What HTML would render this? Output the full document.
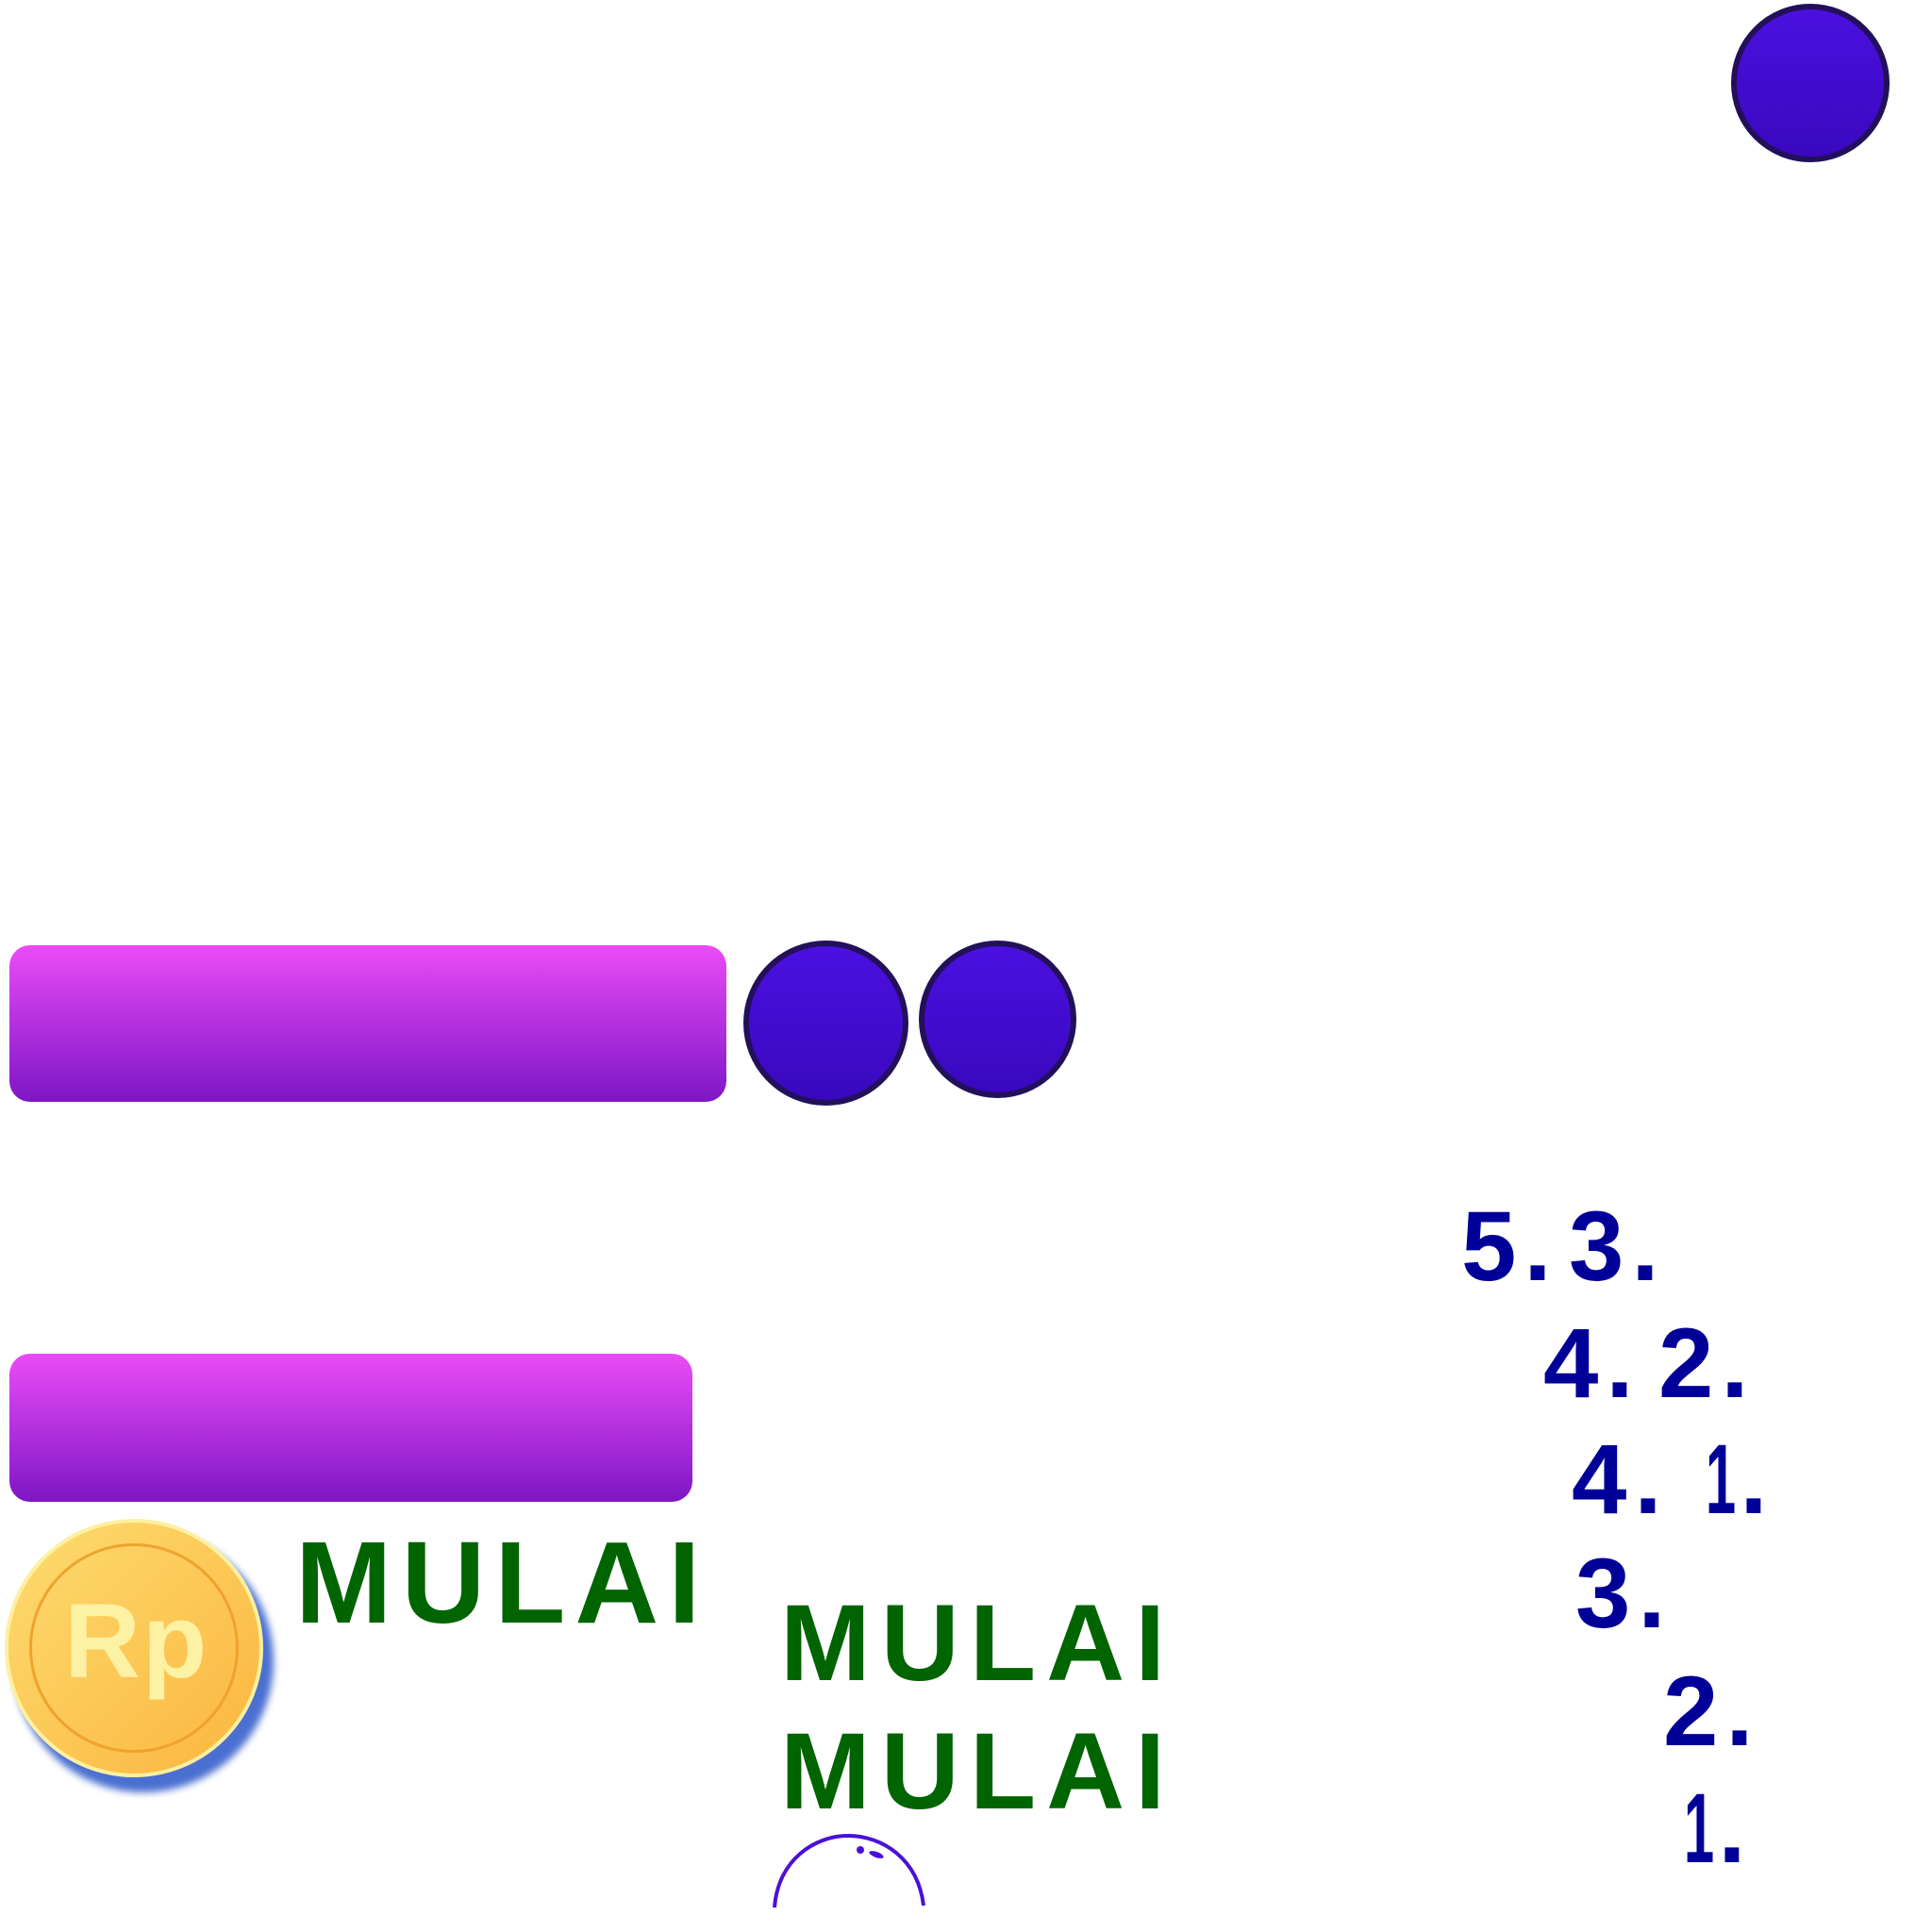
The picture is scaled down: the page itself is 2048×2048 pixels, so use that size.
<!DOCTYPE html>
<html><head><meta charset="utf-8"><style>
html,body{margin:0;padding:0;background:#fff;width:2048px;height:2048px;overflow:hidden;position:relative;font-family:"Liberation Sans",sans-serif}
.c{position:absolute;border-radius:50%;background:linear-gradient(#4b10e0,#3a08bf);border:6px solid #23105a;box-sizing:border-box}
.bar{position:absolute;left:10px;border-radius:22px;background:linear-gradient(#ea4cf6,#7e16c6)}
.m{position:absolute;color:#006400;font-weight:bold;line-height:1;white-space:nowrap}
.n{position:absolute;color:#000099;font-weight:bold;font-size:105px;line-height:1;white-space:nowrap}
.n b{display:inline-block;width:8px}
.one{display:inline-block;transform:scaleX(0.55);transform-origin:left;margin-right:-22px}
</style></head><body>
<div class="c" style="left:1835px;top:4px;width:168px;height:168px"></div>
<div class="bar" style="top:1002px;width:760px;height:166px"></div>
<div class="c" style="left:788px;top:997px;width:175px;height:175px"></div>
<div class="c" style="left:974px;top:997px;width:167px;height:167px"></div>
<div class="bar" style="top:1435px;width:724px;height:157px"></div>

<div style="position:absolute;left:14px;top:1622px;width:276px;height:278px;border-radius:50%;background:#4a6fd0;filter:blur(4px)"></div>
<div style="position:absolute;left:5px;top:1610px;width:274px;height:274px;border-radius:50%;background:linear-gradient(135deg,#fddc70,#fbb53e);border:4px solid #fdf0a0;box-sizing:border-box"></div>
<div style="position:absolute;left:31px;top:1636px;width:222px;height:222px;border-radius:50%;border:3px solid #f0a22e;box-sizing:border-box"></div>
<div style="position:absolute;left:68px;top:1684px;font-size:112px;font-weight:bold;color:#fdf1a3;line-height:1;letter-spacing:2px">Rp</div>

<div class="m" style="left:313px;top:1617px;font-size:123px;letter-spacing:10px">MULAI</div>
<div class="m" style="left:827px;top:1685px;font-size:115px;letter-spacing:11px">MULAI</div>
<div class="m" style="left:827px;top:1821px;font-size:115px;letter-spacing:11px">MULAI</div>

<svg style="position:absolute;left:815px;top:1940px" width="170" height="90" viewBox="0 0 170 90">
<path d="M6 82 C10 30 50 6 84 6 C120 6 158 30 164 80" fill="none" stroke="#4a10d8" stroke-width="4"/>
<circle cx="97" cy="21" r="4" fill="#4a10d8"/>
<ellipse cx="114" cy="26" rx="8" ry="3" transform="rotate(20 114 26)" fill="#4a10d8"/>
</svg>

<div class="n" style="left:1549px;top:1269px">5<b></b>.</div>
<div class="n" style="left:1663px;top:1269px">3<b></b>.</div>
<div class="n" style="left:1636px;top:1393px">4<b></b>.</div>
<div class="n" style="left:1758px;top:1393px">2<b></b>.</div>
<div class="n" style="left:1666px;top:1516px">4<b></b>.</div>
<div class="n" style="left:1808px;top:1516px"><span class="one">1</span>.</div>
<div class="n" style="left:1670px;top:1637px">3<b></b>.</div>
<div class="n" style="left:1763px;top:1762px">2<b></b>.</div>
<div class="n" style="left:1785px;top:1886px"><span class="one">1</span>.</div>
</body></html>
